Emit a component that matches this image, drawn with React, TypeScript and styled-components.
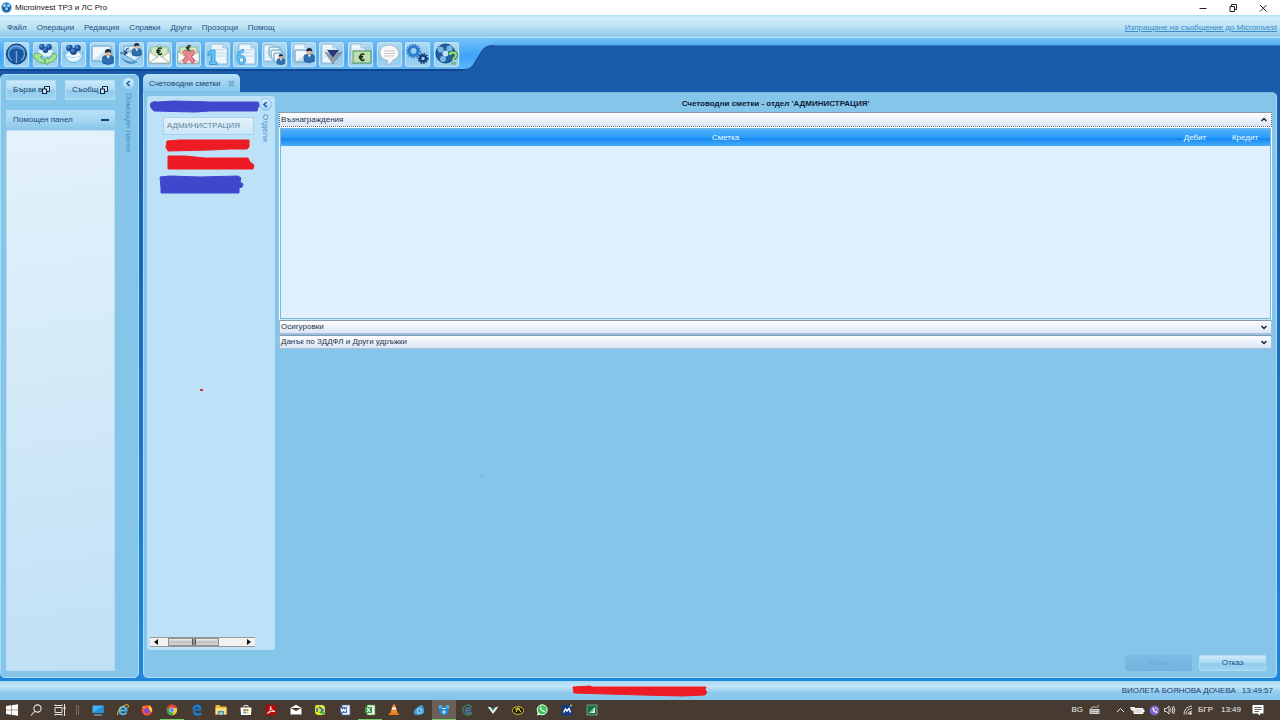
import React from "react";
import styled, { createGlobalStyle, css } from "styled-components";

const GlobalStyle = createGlobalStyle`
  * { box-sizing: border-box; }
  body { margin: 0; background: #1a5aab; }
  button, input, table { font: inherit; color: inherit; }
  button { padding: 0; margin: 0; border: 0; background: none; white-space: nowrap; }
  svg { display: block; flex: none; }
`;

const Page = styled.div`
  display: flex;
  flex-direction: column;
  min-height: 100vh;
  font-family: "Liberation Sans", Arial, sans-serif;
  font-size: 8px;
  line-height: 12px;
  color: #1f3f66;
`;

/* Window chrome */
const TitleBar = styled.header`
  display: flex;
  align-items: center;
  height: 15px;
  padding: 0 11px 0 1px;
  gap: 3px;
  background: #fff;
  color: #111;
`;
const WindowTitle = styled.span`
  flex: 1;
`;
const WindowButtons = styled.div`
  display: flex;
  gap: 18px;
`;
const WindowButton = styled.button`
  width: 12px;
  height: 12px;
`;

const MenuBar = styled.nav`
  display: flex;
  align-items: center;
  height: 23px;
  padding: 2px 3px 0 7px;
  gap: 10px;
  background: linear-gradient(#a5e2fa 0, #d3effb 3px, #b9e0f4 55%, #8dc8e8 92%, #c5e9fa 100%);
`;
const MenuItem = styled.button`
  color: #1f4f7e;
`;
const SupportLink = styled.a`
  margin-left: auto;
  color: #3a8ccc;
`;

const Toolbar = styled.div`
  display: flex;
  height: 33px;
  background: #1a5aab;
`;
const ToolbarTray = styled.div`
  display: flex;
  justify-content: space-between;
  width: 463px;
  padding: 3px 3px 0;
  background: linear-gradient(#74c2f8, #3fa3f7 55%, #5cb6fb 94%, #12478f 95%);
`;
const ToolbarStrip = styled.div`
  flex: 1;
  height: 8px;
  background: linear-gradient(#74c2f8, #58aef5 85%, #1c4f96);
`;
const ToolButton = styled.button`
  width: 27px;
  height: 27px;
  border: 1px solid #6bb2e2;
  border-radius: 3px;
  background: linear-gradient(#b5def6, #8cc8ee 50%, #9fd5f5);
  box-shadow: inset 0 0 0 1px #bfe4f8;
`;

/* Work area */
const Workspace = styled.main`
  display: flex;
  flex: 1;
  gap: 4px;
  padding: 3px 3px 3px 0;
  background: linear-gradient(#1a5aab, #2085dc);
`;
const SidePanel = styled.aside`
  display: flex;
  width: 139px;
  padding: 2px 3px 6px 5px;
  border: 1px solid #a9def8;
  border-radius: 5px;
  background: #86c5ea;
  gap: 6px;
`;
const SideMain = styled.div`
  display: flex;
  flex-direction: column;
  flex: 1;
  padding-top: 3px;
`;
const QuickRow = styled.div`
  display: flex;
  justify-content: space-between;
  padding-bottom: 10px;
`;
const glossy = css`
  background: linear-gradient(#d2ecfa, #a9d8f3 50%, #8ecbee 51%, #a2d5f3);
  box-shadow: inset 0 0 0 1px #b2dcf4;
`;
const QuickButton = styled.button`
  display: flex;
  align-items: center;
  justify-content: space-between;
  width: 50px;
  height: 20px;
  padding: 0 7px;
  ${glossy}
  color: #1d436c;
`;
const HelpHeader = styled.button`
  display: flex;
  align-items: center;
  justify-content: space-between;
  height: 20px;
  padding: 0 6px 0 7px;
  background: linear-gradient(#b9e0f6, #a6d6f2 50%, #88c5e9);
  color: #1d4b80;
`;
const HelpBody = styled.div`
  flex: 1;
  border: 1px solid #b5dcf3;
  background: linear-gradient(172deg, #e4f2fb, #c0e0f5);
`;
const SideRail = styled.div`
  display: flex;
  flex-direction: column;
  align-items: center;
  width: 14px;
  gap: 3px;
`;
const RoundButton = styled.button`
  display: flex;
  align-items: center;
  justify-content: center;
  width: 13px;
  height: 13px;
  border: 1px solid #8cc5ea;
  border-radius: 50%;
  background: linear-gradient(#d8eefb, #9bd0f2);
`;
const VerticalText = styled.span`
  writing-mode: vertical-rl;
  color: #3f8fc8;
`;

const Documents = styled.section`
  display: flex;
  flex-direction: column;
  flex: 1;
`;
const Tab = styled.div`
  display: flex;
  align-items: center;
  align-self: flex-start;
  height: 18px;
  padding: 1px 5px 0 6px;
  gap: 7px;
  border-radius: 5px 5px 0 0;
  background: linear-gradient(#b9e2f8, #8ecbee 80%, #86c5ea);
  color: #1d436c;
`;
const Document = styled.div`
  display: flex;
  flex: 1;
  padding: 3px 4px 6px 3px;
  gap: 4px;
  border: 1px solid #a9def8;
  border-top-color: #7cb9e0;
  border-radius: 0 5px 5px 5px;
  background: #86c5ea;
`;
const Departments = styled.div`
  display: flex;
  width: 128px;
  margin-bottom: 21px;
  padding: 2px 3px 3px 3px;
  border-radius: 3px;
  background: #bde1f7;
`;
const DepartmentTree = styled.div`
  display: flex;
  flex-direction: column;
  flex: 1;
  min-width: 0;
`;
const DepartmentItem = styled.button`
  width: 91px;
  height: 18px;
  margin: 3px 0 3px 13px;
  padding-left: 3px;
  border: 1px solid #a9d3ec;
  background: linear-gradient(#e3f2fb, #cbe7f8);
  color: #64839b;
  text-align: left;
`;
const Spacer = styled.div`
  flex: 1;
`;
const ScrollTrack = styled.div`
  display: flex;
  align-items: center;
  justify-content: space-between;
  width: 105px;
  height: 10px;
  padding: 0 4px;
  border: solid #999;
  border-width: 1px 0;
  background: #f1f1f1;
`;
const ScrollThumb = styled.button`
  display: flex;
  align-items: center;
  justify-content: center;
  width: 51px;
  height: 8px;
  margin-right: 18px;
  border: 1px solid #8d8d8d;
  background: linear-gradient(#f2f2f2, #bdbdbd 50%, #dcdcdc);
`;

const Accounts = styled.div`
  display: flex;
  flex-direction: column;
  flex: 1;
`;
const AccountsTitle = styled.h1`
  margin: 2px 0 2px;
  font-size: 8px;
  line-height: 12px;
  font-weight: 700;
  text-align: center;
  color: #0c2238;
`;
const SectionHeader = styled.button<{ $open?: boolean }>`
  display: flex;
  align-items: center;
  justify-content: space-between;
  height: ${(p) => (p.$open ? 15 : 14)}px;
  margin-bottom: ${(p) => (p.$open ? 0 : 1)}px;
  padding: 0 4px 0 1px;
  border: 1px ${(p) => (p.$open ? "dotted #5d7081" : "solid #a9bfd2")};
  border-top: 1px solid #8799aa;
  background: linear-gradient(#fdfdff, #dde6f5);
  color: #1f3350;
`;
const TableBox = styled.div`
  height: 193px;
  padding: 1px;
  border: 1px solid #fff;
  border-bottom-color: #cbe6f6;
  background: #7ab7dc;
`;
const TableFill = styled.div`
  height: 100%;
  background: #dff1fd;
`;
const AccountTable = styled.table`
  width: 100%;
  table-layout: fixed;
  border-collapse: collapse;
  background: linear-gradient(#52b2fc, #2b9cf8 50%, #1187f0 55%, #4aadfb);
  color: #f0faff;
`;
const Heading = styled.th<{ $narrow?: boolean }>`
  width: ${(p) => (p.$narrow ? "50px" : "auto")};
  height: 17px;
  padding: 0;
  font-weight: 400;
  text-align: center;
`;
const Actions = styled.div`
  display: flex;
  justify-content: flex-end;
  gap: 7px;
  padding-right: 6px;
`;
const ActionButton = styled.button`
  width: 67px;
  height: 16px;
  border-radius: 2px;
  ${glossy}
  color: #1a4a80;
  &:disabled {
    background: linear-gradient(#7cbce4, #72b3de);
    box-shadow: none;
    color: #6aa9d6;
  }
`;

const StatusBar = styled.footer`
  display: grid;
  grid-template-columns: 1fr auto 1fr;
  align-items: center;
  height: 19px;
  background: linear-gradient(#a9daf5, #c2e5f8 30%, #90cbee 60%, #84c5ec);
  color: #1b4273;
`;
const StatusInfo = styled.div`
  display: flex;
  justify-content: flex-end;
  gap: 6px;
  grid-column: 3;
  padding-right: 7px;
`;
const CenterMark = styled.div`
  grid-column: 2;
`;

/* Desktop taskbar */
const Taskbar = styled.div`
  display: flex;
  align-items: center;
  height: 20px;
  background: #473a31;
  color: #f0f0f0;
`;
const TaskGroup = styled.div<{ $width: number }>`
  display: flex;
  justify-content: space-between;
  width: ${(p) => p.$width}px;
`;
const TaskButton = styled.button<{ $active?: boolean; $running?: boolean }>`
  display: flex;
  align-items: center;
  justify-content: center;
  width: 24px;
  height: 20px;
  border-bottom: 1px solid ${(p) => (p.$running ? "#6fcf63" : "transparent")};
  background: ${(p) => (p.$active ? "#6b6058" : "none")};
`;
const TaskDivider = styled.div`
  width: 3px;
  height: 10px;
  margin: 0 7px 0 4px;
  border: solid #756a62;
  border-width: 0 1px;
`;
const Tray = styled.div`
  display: flex;
  align-items: center;
  margin-left: auto;
  padding-right: 16px;
  gap: 4px;
`;
const TrayText = styled.span<{ $gap: number }>`
  margin-right: ${(p) => p.$gap}px;
`;
const TrayChevron = styled.div`
  margin-left: 12px;
`;

/* Stray pen marks floating above the work area */
const PenMark = styled.i<{ $x: number; $y: number; $color: string; $w: number }>`
  position: absolute;
  left: ${(p) => p.$x}px;
  top: ${(p) => p.$y}px;
  width: ${(p) => p.$w}px;
  height: ${(p) => p.$w - (p.$w > 1 ? 1 : 0)}px;
  background: ${(p) => p.$color};
`;

/* Marker strokes */
const RED = "#ed1c24";
const INDIGO = "#3f48cc";
function Stroke({ w, h, d, color }: { w: number; h: number; d: string; color: string }) {
  return (
    <svg width={w} height={h} viewBox={`0 0 ${w} ${h}`} aria-hidden="true">
      <path d={d} fill={color} stroke={color} strokeLinejoin="round" />
    </svg>
  );
}

/* Shared toolbar glyph parts */
const Ball = ({ x, y, r = 3 }: { x: number; y: number; r?: number }) => (
  <g>
    <circle cx={x} cy={y} r={r} fill="#1c4f97" />
    <circle cx={x - r / 4} cy={y - r / 3} r={r / 1.8} fill="#3f83cb" />
  </g>
);
const Person = ({ x, y, s = 1 }: { x: number; y: number; s?: number }) => (
  <g transform={`translate(${x} ${y}) scale(${s})`}>
    <path d="M0 14V9Q0 7 3 6.500H8Q11 7 11 9V14Q5.500 17 0 14Z" fill="#2d6eb0" stroke="#1b4a80" strokeWidth=".6" />
    <path d="M4 7l1.500 3L7.500 7z" fill="#d9ecfa" />
    <ellipse cx="5.500" cy="4" rx="2.600" ry="3.200" fill="#e2b18d" />
    <path d="M2.500 4Q2 0 5.500 0T8.700 4Q7 2 2.500 4Z" fill="#132c4a" />
  </g>
);
const Sheet = ({ x, y, w, h }: { x: number; y: number; w: number; h: number }) => (
  <g>
    <path d={`M${x} ${y}h${w - 4}l4 4v${h - 4}h${-w}z`} fill="#eaf5fd" stroke="#7fa9c9" strokeWidth=".7" />
    <path d={`M${x + w - 4} ${y}v4h4`} fill="#cfe4f4" stroke="#7fa9c9" strokeWidth=".6" />
    <path d={`M${x + 2} ${y + 6}h${w - 4}M${x + 2} ${y + 9}h${w - 4}M${x + 2} ${y + 12}h${w - 4}`} stroke="#b5d0e4" strokeWidth=".7" />
  </g>
);
const Board = ({ x, y, w, h }: { x: number; y: number; w: number; h: number }) => (
  <g>
    <rect x={x} y={y} width={w} height={h} rx="1" fill="#c9e2f3" stroke="#6d9cc2" strokeWidth=".9" />
    <path d={`M${x + 1} ${y + h - 1}L${x + w - 1} ${y + 1}H${x + 1}z`} fill="#f0f8fd" />
  </g>
);
const Envelope = () => (
  <g>
    <path d="M2 10L12.500 3L23 10V21H2Z" fill="#f2f2ea" stroke="#7d9797" strokeWidth=".8" />
    <path d="M4 5H21V12L12.500 17L4 12Z" fill="#cfe9bf" stroke="#85b583" strokeWidth=".7" />
    <path d="M2 10L10 15L2 21ZM23 10L15 15L23 21Z" fill="#fcfcf8" stroke="#8fa6a4" strokeWidth=".6" />
    <path d="M2 21L12.500 13.500L23 21Z" fill="#fafaf5" stroke="#8fa6a4" strokeWidth=".6" />
  </g>
);
const Euro = ({ x, y, s = 1 }: { x: number; y: number; s?: number }) => (
  <path transform={`translate(${x} ${y}) scale(${s})`} d="M6 1.500Q5 .8 4 .8Q1.700 1 1.700 4.200T4 7.500Q5.200 7.500 6 6.500M.3 3.300H4.700M.3 5H4.400" fill="none" stroke="#17281c" strokeWidth="1.300" />
);
const Bowl = () => (
  <g>
    <path d="M3 10Q4 20 12.500 20.500T22 10L18 13H7Z" fill="#d4edfb" stroke="#5ca9dc" strokeWidth=".8" />
    <ellipse cx="12.500" cy="12.500" rx="7.500" ry="3" fill="#f3fbff" stroke="#7fc0e8" strokeWidth=".6" />
    <Ball x={8.5} y={6} r={3.3} /><Ball x={16.5} y={6} r={3.3} /><Ball x={12.5} y={9.5} r={3.4} />
    <path d="M8 16Q12.500 19 18 15" stroke="#fff" fill="none" strokeWidth="1.500" />
  </g>
);
const gearTeeth = (cx: number, cy: number, r: number, color: string, width: number) => (
  <g stroke={color} fill="none">
    <circle cx={cx} cy={cy} r={r} strokeWidth={width} />
    <circle cx={cx} cy={cy} r={r + width / 2 + 0.5} strokeWidth="1.600" strokeDasharray="1.500 1.300" />
  </g>
);

const toolIcons: [string, React.ReactNode][] = [
  ["Начало", <g>
    <circle cx="12.500" cy="12" r="10" fill="#1d579e" stroke="#113a73" />
    <path d="M4 9a9 9 0 0 1 17 0Q12 4 4 9Z" fill="#4a87c4" />
    <path d="M8 18.500a8 8 0 1 1 9 0M12.500 9v12" fill="none" stroke="#68aee4" strokeWidth="1.400" />
  </g>],
  ["Обновяване", <g>
    <ellipse cx="12.500" cy="10.500" rx="8" ry="4.500" fill="#dff3fd" stroke="#7cbde4" strokeWidth=".7" />
    <Ball x={9} y={5} r={2.9} /><Ball x={16} y={5} r={2.9} /><Ball x={12.5} y={8} r={2.9} />
    <path d="M1 12L6 11L10 14L7 15Q8 17 12 17.500V21.500Q4 21 2.500 16L0 16ZM24 13L19 11Q20 16 15 17V15L11 19L15 23V21Q23 20 24 13Z" fill="#a8e39a" stroke="#4ba055" strokeWidth=".7" />
  </g>],
  ["Фирми", <Bowl />],
  ["Служители", <g><Board x={2} y={4} w={19} h={15} /><Person x={12.5} y={7} /></g>],
  ["Структура", <g>
    <path d="M5 4H17V10H5ZM4 12L10 8L22 13L16 19Z" fill="#dceefa" stroke="#5d93bc" strokeWidth=".8" />
    <path d="M5 18Q11 22 16 19M3 16Q9 24 18 20" fill="none" stroke="#3d79aa" />
    <path d="M1 11H8M5 9L8 11L5 13M10 6Q6 7 7 11" fill="none" stroke="#1d5186" strokeWidth="1.200" />
    <Person x={13} y={1} s={0.85} />
  </g>],
  ["Заплати", <g><Envelope /><Euro x={9} y={5} /></g>],
  ["Изтриване", <g><Envelope /><Euro x={10} y={3} s={0.8} />
    <path d="M6.500 10L9.500 8L13 11.500L16.500 8L19 10L15.500 14.500L19 19L16.500 21.500L13 17.500L9 21.500L6.500 19L10 14.500Z" fill="#ee8592" stroke="#cb3f50" strokeWidth=".8" />
  </g>],
  ["Форма 1", <g><Sheet x={6} y={2} w={16} h={20} />
    <path d="M3 10.500L7 8H10V20H12V22.500H4.500V20H6.500V12L3 13.500Z" fill="#62c6f4" stroke="#2a8fd0" strokeWidth=".8" />
  </g>],
  ["Форма 6", <g><Sheet x={6} y={2} w={16} h={20} />
    <path d="M11 8.500Q5 9.500 5 17" fill="none" stroke="#228bcd" strokeWidth="3" /><circle cx="8.500" cy="18" r="3.300" fill="#e2f3fc" stroke="#228bcd" strokeWidth="2.800" />
    <path d="M10.500 8.700Q5 10 5 17" fill="none" stroke="#6ac9f4" strokeWidth="1.800" /><circle cx="8.500" cy="18" r="3.300" fill="none" stroke="#6ac9f4" strokeWidth="1.600" />
  </g>],
  ["Ведомости", <g><Sheet x={2} y={3} w={13} h={16} /><Board x={7} y={5} w={11} h={9} /><Board x={9} y={8} w={11} h={9} /><Board x={12} y={11} w={10} h={9} /><Person x={15} y={12} s={0.7} /></g>],
  ["Досие", <g><Sheet x={3} y={2} w={15} h={18} /><Board x={4} y={8} w={16} h={12} /><Person x={13} y={6} s={0.95} /></g>],
  ["Импорт", <g><Sheet x={3} y={2} w={15} h={19} /><path d="M6 10L14 22L23 10L18 12L14 17L10 12Z" fill="#8f9daa" stroke="#64737f" strokeWidth=".6" /><path d="M8 8H20L14 16Z" fill="#253c78" /></g>],
  ["Плащания", <g><Sheet x={3} y={2} w={14} h={19} /><rect x="5" y="9" width="18" height="12" fill="#bfe0ae" stroke="#4f9058" /><Euro x={10.5} y={11} /></g>],
  ["Съобщения", <g><path d="M12.500 3C5 3 3 7 3 11S7 18 11 18.500L10 23Q15 21 16 18Q22 16 22 11S20 3 12.500 3Z" fill="#f8f8f6" stroke="#a3afb8" strokeWidth=".8" /><path d="M7 9H18M7 11.500H18M7 14H17" stroke="#c4c6c8" strokeWidth="1.200" /></g>],
  ["Настройки", <g>{gearTeeth(8.5, 9, 4.5, "#2d7cca", 3)}{gearTeeth(18, 16.5, 3, "#173f78", 2.5)}</g>],
  ["Помощ", <g>
    <circle cx="11.500" cy="11.500" r="9.500" fill="#235f9f" stroke="#174780" />
    <circle cx="6.500" cy="7.500" r="3" fill="#79b7e5" /><circle cx="15.500" cy="6.500" r="3" fill="#79b7e5" /><circle cx="9" cy="17" r="3" fill="#79b7e5" />
    <circle cx="11.500" cy="11.500" r="3" fill="#bfe2f7" />
    <path d="M16 13Q16 10.500 19 10.500T22 13Q22 15 19.500 16.500V18M19.500 20V22.500" fill="none" stroke="#247b37" strokeWidth="3.500" /><path d="M16 13Q16 10.500 19 10.500T22 13Q22 15 19.500 16.500V18M19.500 20V22.500" fill="none" stroke="#9ce283" strokeWidth="1.900" />
  </g>],
];

const CascadeIcon = () => (
  <svg width="8" height="8" viewBox="0 0 8 8" fill="#d8eefa" stroke="#12253d">
    <path d="M2.500.500H7.500V5.500H2.500Z" /><path d="M.500 3H4.500V7.500H.500Z" strokeWidth="1.200" />
  </svg>
);
const LeftChevron = () => (
  <svg width="7" height="7" viewBox="0 0 7 7" fill="none" stroke="#1759b4" strokeWidth="1.500"><path d="M4.700 1L2 3.500L4.700 6" /></svg>
);
const Caret = ({ up }: { up?: boolean }) => (
  <svg width="6" height="5" viewBox="0 0 6 5" fill="none" stroke="#14263d" strokeWidth="1.500"><path d={up ? "M.5 4L3 1.500L5.500 4" : "M.5 1L3 3.500L5.500 1"} /></svg>
);
const AppLogo = () => (
  <svg width="11" height="11" viewBox="0 0 12 12">
    <circle cx="6" cy="6" r="5.600" fill="#2f83c9" />
    <path d="M2 5Q6 8 10 5Q10 10 6 10.500Q2 10 2 5Z" fill="#1b5596" />
    <circle cx="3.700" cy="4" r="1.500" fill="#a9dbf7" /><circle cx="8.300" cy="4" r="1.500" fill="#a9dbf7" /><circle cx="6" cy="7.500" r="1.500" fill="#a9dbf7" />
  </svg>
);

type Task = { name: string; art: React.ReactNode; active?: boolean; running?: boolean };
const systemTasks: Task[] = [
  { name: "Старт", art: <path d="M0 2L5 1.300V5.700H0ZM5.500 1.200L12 .3V5.700H5.500ZM0 6.300H5V10.700L0 10ZM5.500 6.300H12V11.700L5.500 10.800Z" fill="#fff" /> },
  { name: "Търсене", art: <g fill="none" stroke="#e8e8e8" strokeWidth="1.100"><circle cx="7.500" cy="4.500" r="3.600" /><path d="M5 7L1 11.500" /></g> },
  { name: "Задачи", art: <g fill="none" stroke="#e8e8e8"><path d="M1 3.500H8V8.500H1ZM1 .5V2M8 .5V2M1 1.500H8M1 11.500V10M8 11.500V10M1 10.500H8M10.500 0V12" /><path d="M9.500 4H11.500" strokeWidth="2" /></g> },
];
const Doc = ({ tint, mark }: { tint: string; mark: string }) => (
  <g><path d="M3 1H11V11H3Z" fill="#edf4ec" stroke={tint} strokeWidth=".7" /><path d="M1 3H8V9H1Z" fill={tint} /><path d={mark} fill="none" stroke="#fff" strokeWidth="1.100" /></g>
);
const appTasks: Task[] = [
  { name: "Компютър", art: <g><rect x=".5" y="1.500" width="11" height="7.500" fill="#42b5f5" /><path d="M.5 9L11.500 1.500V9Z" fill="#2093df" /><path d="M2 11H10" stroke="#7fcbf5" /></g> },
  { name: "Internet Explorer", art: <g fill="none"><path d="M9.500 8.500Q8 10.500 6 10.300Q2.500 10 2.500 6.500T6 3Q9.500 3 9.500 6.500H3" stroke="#49b9f2" strokeWidth="2" /><path d="M1 11Q-1 9 4 4T11.500 1.500Q12 2.500 10.500 4" stroke="#f0c33c" /></g> },
  { name: "Firefox", art: <g><circle cx="6" cy="6.300" r="5.300" fill="#f7503a" /><path d="M8 1Q12 4 11 8L7 6Z" fill="#ffc931" /><path d="M1 4Q2 2 3 2L5 4Z" fill="#ffa22f" /><circle cx="6" cy="6.700" r="2.600" fill="#7d48d8" /></g> },
  { name: "Chrome", running: true, art: <g><circle cx="6" cy="6" r="5.200" fill="#f4c52e" /><path d="M1.300 3.500A5.300 5.300 0 0 1 11 4H6L4 7Z" fill="#e44234" /><path d="M1.300 3.500A5.300 5.300 0 0 0 6 11.300L8 7.500L4 7Z" fill="#37a852" /><circle cx="6" cy="6" r="2.500" fill="#fff" /><circle cx="6" cy="6" r="1.900" fill="#4084ee" /></g> },
  { name: "Edge", art: <path d="M10.500 6.500H3.500Q4 9.500 7 9.500Q9 9.500 10.300 8.600V10.800Q9 11.700 6.500 11.700Q2.500 11.500 2 8Q2 5 4.500 4Q2.500 4 1 6.500Q1.500 1 6.300 .6Q11 1 10.500 6.500ZM4 5H8Q8 3 6 3T4 5Z" fill="#1781dc" /> },
  { name: "Файлове", art: <g><path d="M.5 1H4.500L5.500 2.500H11.500V10.500H.5Z" fill="#efb63b" /><path d="M.5 4H11.500V10.500H.5Z" fill="#fadb79" /><path d="M3 11V7H9V11H7.500V8.500H4.500V11Z" fill="#3795d4" /></g> },
  { name: "Магазин", art: <g><path d="M.5 3.500H11.500L11 11H1Z" fill="#fff" /><path d="M4 3.500V1.500H8V3.500" fill="none" stroke="#ddd" /><path d="M3.500 5H5.700V7H3.500Z" fill="#e9502c" /><path d="M6.300 5H8.500V7H6.300Z" fill="#70b32d" /><path d="M3.500 7.500H5.700V9.500H3.500Z" fill="#299de4" /><path d="M6.300 7.500H8.500V9.500H6.300Z" fill="#f7b926" /></g> },
  { name: "Acrobat", art: <g><rect x=".8" y=".8" width="10.400" height="10.400" rx="1" fill="#b30b0b" /><path d="M2.500 9.300Q6 7 5.700 2.500Q6 7 10 7.300Q6 6.500 2.500 9.300Z" fill="none" stroke="#fff" strokeWidth=".9" /></g> },
  { name: "Поща", art: <g><path d="M.5 4L6 .8L11.500 4V10.500H.5Z" fill="#fff" /><path d="M.8 4H11.200L6 7Z" fill="#473a31" /></g> },
  { name: "Карта", art: <g><path d="M2 1H9L11 3V10L9 11H3L1 9V3Z" fill="#e4e42c" /><path d="M5 3L9 6L6 9M3 4V8" fill="none" stroke="#2a76aa" strokeWidth="1.700" /><circle cx="9" cy="9" r="1.500" fill="#3bb54a" /></g> },
  { name: "Writer", art: <Doc tint="#4766b3" mark="M2 4.500L3 7.500L4.500 5L6 7.500L7 4.500" /> },
  { name: "Calc", running: true, art: <Doc tint="#3a9b45" mark="M3 4L6 8M6 4L3 8" /> },
  { name: "VLC", art: <g><path d="M5 .5H7L9.500 9H2.500Z" fill="#f28b23" /><path d="M4.200 3.500H7.800L8.400 5.500H3.600Z" fill="#fff" /><path d="M1 9H11V11H1Z" fill="#e6781b" /></g> },
  { name: "Склад", art: <g><path d="M1 7Q4 2 9 1Q12 5 11 9Q6 13 1 10Z" fill="#3b9fdc" /><circle cx="6.500" cy="7" r="2.700" fill="#a9dcf6" /><path d="M6.500 5V9M4.500 7H8.500" stroke="#2b79b5" /></g> },
  { name: "Microinvest", active: true, running: true, art: <g><circle cx="2.500" cy="3" r="2" fill="#51b3f4" /><circle cx="9.500" cy="3" r="2" fill="#51b3f4" /><path d="M1.500 5Q6 1 10.500 5Q10.500 11 6 11.500Q1.500 11 1.500 5Z" fill="#2583d2" /><circle cx="6" cy="8" r="1.800" fill="#a9e0fa" /><path d="M4 4.500H8" stroke="#c7ebfc" /></g> },
  { name: "Браузър", art: <g fill="none" strokeWidth="1.500"><path d="M10 3A5 5 0 1 0 10 9" stroke="#3d7d62" /><path d="M9 5A2.800 2.800 0 1 0 9 8M4 6.500H9" stroke="#477db1" /></g> },
  { name: "Viva", art: <g><path d="M.5 2.500L4 3.500L6 5L8 3.500L11.500 2.500L9 6L6 10L3 6Z" fill="#f1f4f2" /><path d="M4 4L6 7L8 4Z" fill="#278e7b" /></g> },
  { name: "Такси", art: <g><ellipse cx="6" cy="6.500" rx="5.700" ry="3.800" fill="#151515" stroke="#dfc720" /><path d="M3 5H8M4 8L6 4L9 8" fill="none" stroke="#f6db28" strokeWidth="1.100" /></g> },
  { name: "WhatsApp", art: <g><circle cx="6.200" cy="5.800" r="5" fill="#35c759" stroke="#fff" /><path d="M.8 11.500L2 8L4.500 10.500Z" fill="#fff" /><path d="M4 3.500Q4 7.500 8.500 8L9 7L7.500 6L6.500 6.800L5.200 5.300L5.700 4.500L5 3Z" fill="#fff" /></g> },
  { name: "Модул", art: <g><rect x=".8" y="1" width="10.400" height="10.400" fill="#153a85" /><path d="M2.500 8.500L4.500 5L6 7L8 4.500L9.500 8.500" fill="none" stroke="#fff" strokeWidth="1.400" /><circle cx="10" cy="1.500" r="1" fill="#d8cf6b" /></g> },
  { name: "Редактор", art: <g><rect x="1" y="1" width="10" height="10" fill="#176f3d" stroke="#7db68c" strokeWidth=".8" /><path d="M3 9L9 3V9Z" fill="#effaf0" /><path d="M5 8.500L8 5.500" stroke="#176f3d" /></g> },
];
const renderTask = (t: Task) => (
  <TaskButton key={t.name} aria-label={t.name} $active={t.active} $running={t.running}>
    <svg width="12" height="12" viewBox="0 0 12 12">{t.art}</svg>
  </TaskButton>
);

export default function App() {
  return (
    <Page>
      <GlobalStyle />
      <TitleBar>
        <AppLogo />
        <WindowTitle>Microinvest ТРЗ и ЛС Pro</WindowTitle>
        <WindowButtons>
          {["M2.500 6.500H9.500", "M3 4.500H7.500V9.500H3ZM4.500 4V2.500H9.500V7.500H8", "M3 3L9.500 9.500M9.500 3L3 9.500"].map((d, i) => (
            <WindowButton key={d} aria-label={["Минимизиране", "Възстановяване", "Затваряне"][i]}>
              <svg width="12" height="12" viewBox="0 0 12 12" fill="none" stroke="#222"><path d={d} /></svg>
            </WindowButton>
          ))}
        </WindowButtons>
      </TitleBar>
      <MenuBar>
        {["Файл", "Операции", "Редакция", "Справки", "Други", "Прозорци", "Помощ"].map((m) => (
          <MenuItem key={m}>{m}</MenuItem>
        ))}
        <SupportLink href="#support">Изпращане на съобщение до Microinvest</SupportLink>
      </MenuBar>
      <Toolbar>
        <ToolbarTray>
          {toolIcons.map(([name, art]) => (
            <ToolButton key={name} aria-label={name}>
              <svg width="25" height="25" viewBox="0 0 25 25">{art}</svg>
            </ToolButton>
          ))}
        </ToolbarTray>
        <svg width="30" height="33" viewBox="0 0 30 33" aria-hidden="true">
          <defs>
            <linearGradient id="trayEdge" x2="0" y2="1">
              <stop stopColor="#74c2f8" /><stop offset=".55" stopColor="#3fa3f7" /><stop offset="1" stopColor="#5cb6fb" />
            </linearGradient>
          </defs>
          <path d="M0 0H30V7.500C19 8 19 14 14 21C9 29 8 31.500 0 31.500Z" fill="url(#trayEdge)" />
          <path d="M30 7.500C19 8 19 14 14 21C9 29 8 31.500 0 31.500" fill="none" stroke="#12478f" />
        </svg>
        <ToolbarStrip />
      </Toolbar>

      <Workspace>
        <SidePanel>
          <SideMain>
            <QuickRow>
              <QuickButton aria-label="Бързи връзки">Бързи в<CascadeIcon /></QuickButton>
              <QuickButton aria-label="Съобщения">Съобщ<CascadeIcon /></QuickButton>
            </QuickRow>
            <HelpHeader>
              Помощен панел
              <svg width="8" height="2" viewBox="0 0 8 2"><path d="M0 1H8" stroke="#12407a" strokeWidth="2" /></svg>
            </HelpHeader>
            <HelpBody />
          </SideMain>
          <SideRail>
            <RoundButton aria-label="Свиване на панела"><LeftChevron /></RoundButton>
            <VerticalText>Помощен панел</VerticalText>
          </SideRail>
        </SidePanel>

        <Documents>
          <Tab>
            Счетоводни сметки
            <button aria-label="Затваряне на раздела">
              <svg width="7" height="7" viewBox="0 0 7 7" fill="none"><path d="M1 1L6 6M6 1L1 6" stroke="#5f9cc8" strokeWidth="2.200" /><path d="M1 1L6 6M6 1L1 6" stroke="#a9d6f0" strokeWidth=".8" /></svg>
            </button>
          </Tab>
          <Document>
            <Departments>
              <DepartmentTree>
                <Stroke w={111} h={16} color={INDIGO} d="M1 5Q3 3 8 4L24 3L60 4L108 4L110 8L108 9L107 13L60 13L45 14L4 13Q-1 9 1 5Z" />
                <DepartmentItem>АДМИНИСТРАЦИЯ</DepartmentItem>
                <Stroke
                  w={107}
                  h={34}
                  color={RED}
                  d="M17 3L30 2L99 2L99 9L97 11L80 11L60 12L18 13L16 9ZM18 18L35 18L55 20L98 20L100 24L104 27L103 31L18 31L18 24Z"
                />
                <Stroke w={107} h={24} color={INDIGO} d="M10 5L20 4L50 5L88 4L91 6L90 10L93 12L92 15L89 16L89 21L11 21L11 16Z" />
                <Spacer />
                <ScrollTrack>
                  <svg width="4" height="6" viewBox="0 0 4 6"><path d="M4 0V6L0 3Z" fill="#111" /></svg>
                  <Spacer />
                  <ScrollThumb aria-label="Хоризонтално превъртане">
                    <svg width="4" height="6" viewBox="0 0 4 6"><path d="M.5 0V6M2 0V6M3.500 0V6" stroke="#555" /></svg>
                  </ScrollThumb>
                  <Spacer />
                  <svg width="4" height="6" viewBox="0 0 4 6"><path d="M0 0V6L4 3Z" fill="#111" /></svg>
                </ScrollTrack>
              </DepartmentTree>
              <SideRail>
                <RoundButton aria-label="Свиване на отделите"><LeftChevron /></RoundButton>
                <VerticalText>Отдели</VerticalText>
              </SideRail>
            </Departments>

            <Accounts>
              <AccountsTitle>Счетоводни сметки - отдел 'АДМИНИСТРАЦИЯ'</AccountsTitle>
              <SectionHeader $open aria-expanded="true">Възнаграждения<Caret up /></SectionHeader>
              <TableBox>
                <TableFill>
                  <AccountTable>
                    <thead>
                      <tr><Heading>Сметка</Heading><Heading $narrow>Дебит</Heading><Heading $narrow>Кредит</Heading></tr>
                    </thead>
                  </AccountTable>
                </TableFill>
              </TableBox>
              <SectionHeader aria-expanded="false">Осигуровки<Caret /></SectionHeader>
              <SectionHeader aria-expanded="false">Данък по ЗДДФЛ и Други удръжки<Caret /></SectionHeader>
              <Spacer />
              <Actions>
                <ActionButton disabled>Запис</ActionButton>
                <ActionButton>Отказ</ActionButton>
              </Actions>
            </Accounts>
          </Document>
        </Documents>
      </Workspace>

      <StatusBar>
        <CenterMark>
          <Stroke w={136} h={12} color={RED} d="M1 2L18 1L20 2L134 2L133 5L135 7L133 10L110 11L70 10L35 9L2 8Z" />
        </CenterMark>
        <StatusInfo><span>ВИОЛЕТА БОЯНОВА ДОЧЕВА</span><span>13:49:57</span></StatusInfo>
      </StatusBar>

      <Taskbar>
        <TaskGroup $width={72}>{systemTasks.map(renderTask)}</TaskGroup>
        <TaskDivider />
        <TaskGroup $width={518}>{appTasks.map(renderTask)}</TaskGroup>
        <Tray>
          <TrayText $gap={2}>BG</TrayText>
          <svg width="11" height="10" viewBox="0 0 11 10"><path d="M.5 4H10.500V9H.5Z" fill="#d0d0d0" /><path d="M2 4Q2 1 6 2T9 0" fill="none" stroke="#bbb" /><path d="M1.500 5.500H10M1.500 7.500H10" stroke="#6b625c" strokeDasharray="1 .5" strokeWidth=".7" /></svg>
          <TrayChevron>
            <svg width="9" height="6" viewBox="0 0 9 6" fill="none" stroke="#eee"><path d="M1 5L4.500 1.500L8 5" /></svg>
          </TrayChevron>
          <svg width="16" height="10" viewBox="0 0 16 10"><path d="M5 3.500H14V8.500H5Z" fill="#ddd" stroke="#fff" /><path d="M1 2H6V5Q4 7 2 5Z" fill="#eee" /><path d="M14.500 5V7" stroke="#fff" strokeWidth="2" /></svg>
          <svg width="11" height="11" viewBox="0 0 11 11"><circle cx="5.500" cy="5.500" r="5" fill="#7b67c4" /><path d="M3.500 3Q3.500 7.500 8 8L8.500 6.800L7 6L6 6.500L5 5L5.500 4L4.500 2.500Z" fill="#fff" /><path d="M6 2.500Q8.500 3 8.500 5" stroke="#fff" strokeWidth=".7" fill="none" /></svg>
          <svg width="12" height="10" viewBox="0 0 12 10" fill="none" stroke="#eee" strokeWidth=".9"><path d="M.5 3.500H2.500L5 1V9L2.500 6.500H.5ZM6.500 3.500Q7.500 5 6.500 6.500M8 2Q10 5 8 8M9.500 1Q12 5 9.500 9" /></svg>
          <svg width="14" height="10" viewBox="0 0 14 10" fill="none" stroke="#ccc" strokeWidth="1"><path d="M4 9.500Q4 2 12 1M6 9.500Q6 4 12 3.500M8 9.500Q8 6.500 12 6" /><circle cx="10.500" cy="8.500" r="1" fill="#eee" /></svg>
          <TrayText $gap={4}>БГР</TrayText>
          <TrayText $gap={7}>13:49</TrayText>
          <svg width="12" height="12" viewBox="0 0 12 12"><path d="M.5 1H11.500V9.500H8V11.500L5.500 9.500H.5Z" fill="#fff" /><path d="M2.500 3.500H9.500M2.500 5.500H9.500M2.500 7.500H7" stroke="#473a31" strokeWidth=".8" /></svg>
        </Tray>
      </Taskbar>
      <PenMark $x={200} $y={389} $w={3} $color="#d8283c" />
      <PenMark $x={481} $y={475} $w={1} $color="#4e7d9c" />
    </Page>
  );
}
